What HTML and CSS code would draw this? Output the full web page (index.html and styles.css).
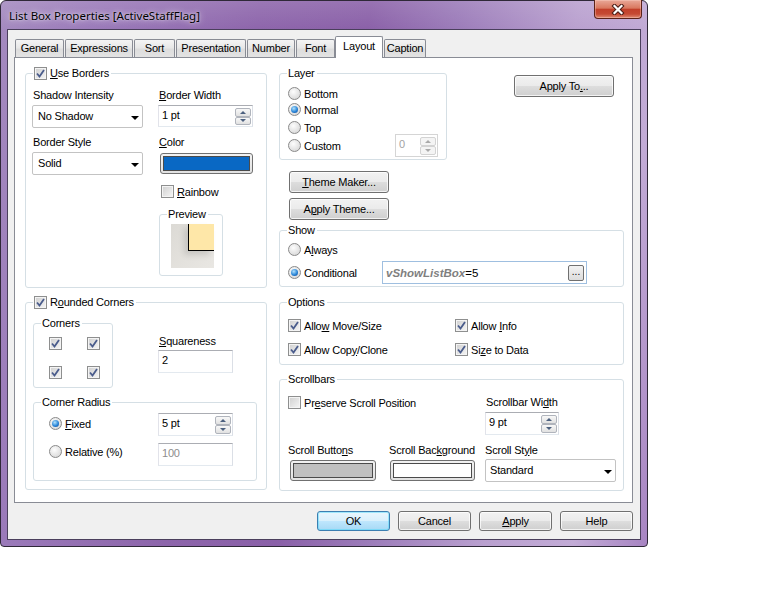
FILE: index.html
```html
<!DOCTYPE html>
<html lang="en">
<head>
    <meta charset="UTF-8">
    <title>List Box Properties [ActiveStaffFlag]</title>
    <link rel="stylesheet" href="styles.css">
</head>
<body>
<div class="window">
    <div class="titlebar">
        <div class="title">List Box Properties [ActiveStaffFlag]</div>
        <div class="close">
            <svg width="14" height="11" viewBox="0 0 14 11"><path class="x-edge" d="M3.5 2l7 7M10.5 2l-7 7"/><path class="x-core" d="M3.5 2l7 7M10.5 2l-7 7"/></svg>
        </div>
    </div>

    <div class="client">
        <div class="tabs">
            <div class="tab w-general">General</div>
            <div class="tab w-expr">Expressions</div>
            <div class="tab w-sort">Sort</div>
            <div class="tab w-pres">Presentation</div>
            <div class="tab w-num">Number</div>
            <div class="tab w-font">Font</div>
            <div class="tab active w-layout">Layout</div>
            <div class="tab w-caption">Caption</div>
        </div>

        <div class="page">
            <!-- left column -->
            <div class="col-left">
                <div class="group g-borders">
                    <div class="legend">
                        <span class="cb on"><svg viewBox="0 0 11 11"><path d="M2 5.5l2.5 3L9 2"/></svg></span>
                        <span><u>U</u>se Borders</span>
                    </div>
                    <div class="borders-body">
                        <div class="borders-a">
                            <div class="lbl">Shadow Intensity</div>
                            <div class="combo mt3">No Shadow</div>
                            <div class="lbl mt8">Border Style</div>
                            <div class="combo mt3">Solid</div>
                        </div>
                        <div class="borders-b">
                            <div class="lbl"><u>B</u>order Width</div>
                            <div class="spin mt3 w95">
                                <div class="spin-val">1 pt</div>
                                <div class="arrows"><span class="arr up"></span><span class="arr down"></span></div>
                            </div>
                            <div class="lbl mt9"><u>C</u>olor</div>
                            <div class="colorbtn border-color"><span class="swatch blue"></span></div>
                            <div class="check rainbow">
                                <span class="cb"></span><span><u>R</u>ainbow</span>
                            </div>
                            <div class="group g-preview">
                                <div class="legend">Preview</div>
                                <div class="preview"><div class="preview-box"></div></div>
                            </div>
                        </div>
                    </div>
                </div>

                <div class="group g-rounded">
                    <div class="legend">
                        <span class="cb on"><svg viewBox="0 0 11 11"><path d="M2 5.5l2.5 3L9 2"/></svg></span>
                        <span>R<u>o</u>unded Corners</span>
                    </div>
                    <div class="rounded-top">
                        <div class="group g-corners">
                            <div class="legend">Corners</div>
                            <div class="corner-grid">
                                <span class="cb on"><svg viewBox="0 0 11 11"><path d="M2 5.5l2.5 3L9 2"/></svg></span>
                                <span class="cb on"><svg viewBox="0 0 11 11"><path d="M2 5.5l2.5 3L9 2"/></svg></span>
                                <span class="cb on"><svg viewBox="0 0 11 11"><path d="M2 5.5l2.5 3L9 2"/></svg></span>
                                <span class="cb on"><svg viewBox="0 0 11 11"><path d="M2 5.5l2.5 3L9 2"/></svg></span>
                            </div>
                        </div>
                        <div class="squareness">
                            <div class="lbl"><u>S</u>quareness</div>
                            <div class="edit field75 mt2">2</div>
                        </div>
                    </div>
                    <div class="group g-radius">
                        <div class="legend">Corner Radius</div>
                        <div class="radius-row first">
                            <div class="radio rad-wide"><span class="rb on"></span><span><u>F</u>ixed</span></div>
                            <div class="spin field75">
                                <div class="spin-val">5 pt</div>
                                <div class="arrows"><span class="arr up"></span><span class="arr down"></span></div>
                            </div>
                        </div>
                        <div class="radius-row second">
                            <div class="radio rad-wide"><span class="rb"></span><span>Relative (%)</span></div>
                            <div class="edit field75 muted">100</div>
                        </div>
                    </div>
                </div>
            </div>

            <!-- right column -->
            <div class="col-right">
                <div class="top-right">
                    <div class="group g-layer">
                        <div class="legend">Layer</div>
                        <div class="layer-body">
                            <div class="radio r-bottom"><span class="rb"></span><span>Bottom</span></div>
                            <div class="radio r-normal"><span class="rb on"></span><span>Normal</span></div>
                            <div class="radio r-top"><span class="rb"></span><span>Top</span></div>
                            <div class="custom-row">
                                <div class="radio"><span class="rb"></span><span>Custom</span></div>
                                <div class="spin custom-spin disabled">
                                    <div class="spin-val">0</div>
                                    <div class="arrows"><span class="arr up"></span><span class="arr down"></span></div>
                                </div>
                            </div>
                        </div>
                    </div>
                    <div class="btn apply-to">Apply To<u>.</u>..</div>
                </div>
                <div class="btn theme-btn first"><u>T</u>heme Maker...</div>
                <div class="btn theme-btn second">A<u>p</u>ply Theme...</div>

                <div class="group g-show">
                    <div class="legend">Show</div>
                    <div class="radio show-always"><span class="rb"></span><span>A<u>l</u>ways</span></div>
                    <div class="show-cond">
                        <div class="radio cond-lbl"><span class="rb on"></span><span>Conditional</span></div>
                        <div class="cond-edit">
                            <span class="expr-var">vShowListBox</span><span>=5</span>
                            <span class="dots">...</span>
                        </div>
                    </div>
                </div>

                <div class="group g-options">
                    <div class="legend">Options</div>
                    <div class="opt-row first">
                        <div class="check opt-wide"><span class="cb on"><svg viewBox="0 0 11 11"><path d="M2 5.5l2.5 3L9 2"/></svg></span><span>Allo<u>w</u> Move/Size</span></div>
                        <div class="check"><span class="cb on"><svg viewBox="0 0 11 11"><path d="M2 5.5l2.5 3L9 2"/></svg></span><span>Allow <u>I</u>nfo</span></div>
                    </div>
                    <div class="opt-row second">
                        <div class="check opt-wide"><span class="cb on"><svg viewBox="0 0 11 11"><path d="M2 5.5l2.5 3L9 2"/></svg></span><span>Allow Cop<u>y</u>/Clone</span></div>
                        <div class="check"><span class="cb on"><svg viewBox="0 0 11 11"><path d="M2 5.5l2.5 3L9 2"/></svg></span><span>Si<u>z</u>e to Data</span></div>
                    </div>
                </div>

                <div class="group g-scroll">
                    <div class="legend">Scrollbars</div>
                    <div class="scroll-grid">
                        <div class="check preserve"><span class="cb"></span><span>Pr<u>e</u>serve Scroll Position</span></div>
                        <div class="sw-block">
                            <div class="lbl">Scrollbar Wi<u>d</u>th</div>
                            <div class="spin mt3 sw-spin">
                                <div class="spin-val">9 pt</div>
                                <div class="arrows"><span class="arr up"></span><span class="arr down"></span></div>
                            </div>
                        </div>
                        <div class="sb-block">
                            <div class="lbl">Scroll Butto<u>n</u>s</div>
                            <div class="colorbtn sb-gray"><span class="swatch gray"></span></div>
                        </div>
                        <div class="sb-block">
                            <div class="lbl">Scroll Bac<u>k</u>ground</div>
                            <div class="colorbtn sb-white"><span class="swatch white"></span></div>
                        </div>
                        <div class="sb-block">
                            <div class="lbl">Scroll St<u>y</u>le</div>
                            <div class="combo mt2 style-combo">Standard</div>
                        </div>
                    </div>
                </div>
            </div>
        </div>

        <div class="dlg-buttons">
            <div class="btn default">OK</div>
            <div class="btn">Cancel</div>
            <div class="btn"><u>A</u>pply</div>
            <div class="btn">Help</div>
        </div>
    </div>
</div>
</body>
</html>
```

FILE: styles.css
```css
* {
    box-sizing: border-box;
}

body {
    margin: 0;
    background: #fff;
    font-family: "Liberation Sans", Arial, sans-serif;
    font-size: 11px;
    letter-spacing: -0.2px;
    color: #000;
}

u {
    text-decoration: underline;
    text-underline-offset: 1px;
}

/* window frame */
.window {
    width: 648px;
    height: 547px;
    border: 1px solid #2f2838;
    border-radius: 6px 6px 4px 4px;
    padding: 0 6px 6px;
    background:
        linear-gradient(to bottom, rgba(255, 255, 255, 0.12), rgba(255, 255, 255, 0) 30px),
        linear-gradient(100deg, #a48abf 0%, #9b7bba 12%, #8d65ab 35%, #8a60a8 50%, #9b7bb9 62%, #b9a0cf 78%, #c2abd6 90%, #a784c2 100%);
}

.titlebar {
    height: 28px;
    display: flex;
    justify-content: space-between;
    align-items: flex-start;
}

.title {
    font-family: "Noto Sans", "Liberation Sans", sans-serif;
    font-size: 11.5px;
    letter-spacing: 0;
    line-height: 16px;
    padding: 7px 0 0 2px;
    text-shadow: 0 0 6px rgba(255, 255, 255, 0.85), 0 0 2px rgba(255, 255, 255, 0.6);
}

.close {
    width: 48px;
    height: 19px;
    margin: -1px -1px 0 0;
    border: 1px solid #5b2219;
    border-top: 0;
    border-radius: 0 0 4px 4px;
    background: linear-gradient(#e9a898 0%, #d9785f 45%, #c2402a 52%, #c54a33 78%, #e08c74 100%);
    box-shadow: inset 0 0 0 1px rgba(255, 220, 210, 0.35);
    display: flex;
    align-items: center;
    justify-content: center;
}

.close svg path {
    fill: none;
    stroke-linecap: square;
}

.x-edge {
    stroke: #4a1d16;
    stroke-width: 4.2;
}

.x-core {
    stroke: #fff;
    stroke-width: 2.2;
}

.client {
    height: 511px;
    border: 1px solid #4a3f5c;
    background: #f0f0f0;
}

/* tabs */
.tabs {
    display: flex;
    align-items: flex-end;
    height: 21px;
    margin-top: 6px;
    padding-left: 7px;
}

.tab {
    height: 18px;
    margin-left: 1px;
    border: 1px solid #898c95;
    border-bottom: 0;
    border-radius: 2px 2px 0 0;
    background: linear-gradient(#f4f4f4, #e8e8e8 45%, #dddddd 55%, #e3e3e3);
    text-align: center;
    line-height: 16px;
    white-space: nowrap;
}

.tab:first-child {
    margin-left: 0;
}

.tab.active {
    position: relative;
    z-index: 2;
    height: 22px;
    margin-left: 0;
    margin-bottom: -1px;
    background: #fff;
    line-height: 18px;
}

.w-general { width: 49px; }
.w-expr { width: 68px; }
.w-sort { width: 41px; }
.w-pres { width: 70px; }
.w-num { width: 48px; }
.w-font { width: 39px; }
.w-layout { width: 48px; }
.w-caption { width: 42px; }

/* tab page */
.page {
    position: relative;
    z-index: 1;
    height: 446px;
    margin: 0 7px 0 6px;
    border: 1px solid #898c95;
    background: #fff;
    padding: 15px 0 0 10px;
    display: flex;
    align-items: flex-start;
    gap: 12px;
}

.col-left {
    width: 242px;
}

.col-right {
    width: 345px;
}

/* group boxes */
.group {
    border: 1px solid #d5dfe5;
    border-radius: 3px;
}

.legend {
    display: flex;
    align-items: center;
    gap: 3px;
    width: max-content;
    height: 13px;
    line-height: 13px;
    margin: -7px 0 0 7px;
    padding: 0 2px 0 1px;
    background: #fff;
}

.lbl {
    height: 13px;
    line-height: 13px;
    padding-left: 1px;
    white-space: nowrap;
}

.mt2 { margin-top: 2px; }
.mt3 { margin-top: 3px; }
.mt8 { margin-top: 8px; }
.mt9 { margin-top: 9px; }

/* controls */
.combo {
    position: relative;
    height: 23px;
    border: 1px solid #c3c3c3;
    border-radius: 2px;
    background: #fff;
    padding-left: 5px;
    line-height: 21px;
}

.combo::after {
    content: "";
    position: absolute;
    right: 3px;
    top: 10px;
    border-left: 4px solid transparent;
    border-right: 4px solid transparent;
    border-top: 4px solid #000;
}

.edit,
.spin {
    height: 23px;
    border: 1px solid;
    border-color: #abadb3 #dbdfe6 #e3e9ef #e2e3ea;
    background: #fff;
}

.edit {
    padding: 2px 0 0 3px;
    line-height: 14px;
}

.edit.muted {
    color: #8d8d8d;
}

.field75 {
    width: 75px;
}

.w95 {
    width: 95px;
}

.spin {
    display: flex;
    height: 22px;
    padding: 2px 1px 1px 0;
}

.spin-val {
    flex: 1;
    padding-left: 3px;
    line-height: 14px;
}

.arrows {
    width: 16px;
    display: flex;
    flex-direction: column;
    justify-content: space-between;
}

.arr {
    height: 9px;
    border: 1px solid #b0b4bc;
    border-radius: 2px;
    background: linear-gradient(#f8f8f8, #e1e1e1);
    display: flex;
    align-items: center;
    justify-content: center;
}

.arr.up::after {
    content: "";
    border-left: 3px solid transparent;
    border-right: 3px solid transparent;
    border-bottom: 3px solid #4c607f;
}

.arr.down::after {
    content: "";
    border-left: 3px solid transparent;
    border-right: 3px solid transparent;
    border-top: 3px solid #4c607f;
}

.spin.disabled {
    border-color: #d5d5d5;
    color: #a3a3a3;
}

.spin.disabled .arr {
    border-color: #d3d3d3;
    background: #f4f4f4;
}

.spin.disabled .arr.up::after { border-bottom-color: #a9a9a9; }
.spin.disabled .arr.down::after { border-top-color: #a9a9a9; }

.btn {
    display: flex;
    align-items: center;
    justify-content: center;
    border: 1px solid #707070;
    border-radius: 3px;
    background: linear-gradient(#f2f2f2, #ebebeb 48%, #dddddd 52%, #cfcfcf);
    box-shadow: inset 0 0 0 1px rgba(255, 255, 255, 0.75);
    white-space: nowrap;
}

.btn.default {
    border-color: #3c7fb1;
    background: linear-gradient(#eaf6fd, #d9f0fc 48%, #bee6fd 52%, #a7d9f5);
    box-shadow: inset 0 0 0 1px rgba(72, 216, 251, 0.45);
}

.cb {
    flex: none;
    width: 13px;
    height: 13px;
    border: 1px solid #8e8f8f;
    background: linear-gradient(135deg, #cfcfcf, #f6f6f6);
    box-shadow: inset 0 0 0 1px #f4f4f4;
}

.cb svg {
    display: block;
    width: 11px;
    height: 11px;
}

.cb svg path {
    fill: none;
    stroke: #4a5c8c;
    stroke-width: 1.8;
}

.rb {
    position: relative;
    flex: none;
    width: 13px;
    height: 13px;
    border: 1px solid #8a8a8a;
    border-radius: 50%;
    background: radial-gradient(circle at 40% 35%, #fdfdfd, #dedede 70%, #cdcdcd);
}

.rb.on::after {
    content: "";
    position: absolute;
    left: 2px;
    top: 2px;
    width: 7px;
    height: 7px;
    border-radius: 50%;
    background: radial-gradient(circle at 40% 35%, #b3e2fc, #2a86d8 55%, #0d3f8c);
}

.check,
.radio {
    display: flex;
    align-items: center;
    gap: 3px;
    height: 13px;
    white-space: nowrap;
}

.colorbtn {
    height: 21px;
    border: 1px solid #707070;
    border-radius: 3px;
    padding: 2px;
    background: linear-gradient(#f2f2f2, #e2e2e2);
}

.swatch {
    display: block;
    height: 100%;
    border: 1px solid #4b4b4b;
}

.swatch.blue { background: #0968c4; }
.swatch.gray { background: #c0c0c0; }
.swatch.white { background: #fff; }

/* use borders group */
.g-borders {
    height: 215px;
}

.borders-body {
    display: flex;
    padding-left: 6px;
    margin-top: 9px;
}

.borders-a {
    width: 111px;
}

.borders-b {
    width: 95px;
    margin-left: 15px;
}

.border-color {
    width: 93px;
    margin: 4px 0 0 2px;
}

.rainbow {
    margin: 11px 0 0 3px;
}

.g-preview {
    width: 64px;
    height: 62px;
    margin: 16px 0 0 1px;
}

.preview {
    width: 43px;
    height: 44px;
    margin: 3px 0 0 11px;
    display: flex;
    justify-content: flex-end;
    background: linear-gradient(135deg, #dcdad5, #e9e7e3);
}

.preview-box {
    width: 26px;
    height: 27px;
    background: #fee7a8;
    border-left: 1px solid #000;
    border-bottom: 1px solid #000;
    box-shadow: -4px 4px 6px rgba(0, 0, 0, 0.12);
}

/* rounded corners group */
.g-rounded {
    height: 188px;
    margin-top: 14px;
}

.rounded-top {
    display: flex;
    align-items: flex-start;
    margin-top: 14px;
}

.g-corners {
    width: 80px;
    height: 65px;
    margin-left: 7px;
}

.corner-grid {
    display: grid;
    grid-template-columns: 13px 13px;
    column-gap: 25px;
    row-gap: 16px;
    margin: 7px 0 0 15px;
}

.squareness {
    margin: 12px 0 0 45px;
}

.g-radius {
    width: 224px;
    height: 79px;
    margin: 14px 0 0 7px;
}

.radius-row {
    display: flex;
    align-items: flex-start;
    padding-left: 15px;
}

.radius-row.first {
    margin-top: 4px;
    height: 23px;
}

.radius-row.first .radio {
    margin-top: 4px;
}

.radius-row.first .spin {
    height: 23px;
}

.radius-row.second {
    margin-top: 7px;
}

.radius-row.second .radio {
    margin-top: 2px;
}

.rad-wide {
    width: 109px;
}

/* layer group */
.top-right {
    display: flex;
    align-items: flex-start;
}

.g-layer {
    width: 168px;
    height: 87px;
}

.layer-body {
    padding-left: 8px;
}

.r-bottom { margin-top: 7px; }
.r-normal { margin-top: 3px; }
.r-top { margin-top: 5px; }

.custom-row {
    display: flex;
    align-items: center;
    height: 23px;
}

.custom-spin {
    width: 43px;
    height: 23px;
    margin: 0 8px 0 auto;
}

.apply-to {
    width: 100px;
    height: 22px;
    margin: 2px 0 0 67px;
}

.theme-btn {
    width: 100px;
    height: 22px;
    margin-left: 10px;
}

.theme-btn.first { margin-top: 11px; }
.theme-btn.second { margin-top: 5px; }

/* show group */
.g-show {
    height: 57px;
    margin-top: 10px;
}

.show-always {
    margin: 6px 0 0 8px;
}

.show-cond {
    display: flex;
    align-items: center;
    height: 23px;
    margin: 5px 0 0 8px;
}

.cond-lbl {
    width: 94px;
}

.cond-edit {
    width: 205px;
    height: 23px;
    border: 1px solid #9fbfe0;
    display: flex;
    align-items: center;
    padding-left: 3px;
    font-size: 11.5px;
    letter-spacing: 0;
}

.expr-var {
    font-weight: bold;
    font-style: italic;
    color: #7f7f7f;
}

.dots {
    width: 16px;
    height: 16px;
    margin: 0 2px 0 auto;
    border: 1px solid #707070;
    border-radius: 2px;
    background: linear-gradient(#f2f2f2, #dcdcdc);
    font-size: 10px;
    line-height: 12px;
    text-align: center;
    letter-spacing: 0;
}

/* options group */
.g-options {
    height: 63px;
    margin-top: 15px;
}

.opt-row {
    display: flex;
    padding-left: 8px;
}

.opt-row.first { margin-top: 10px; }
.opt-row.second { margin-top: 11px; }

.opt-wide {
    width: 167px;
}

/* scrollbars group */
.g-scroll {
    height: 112px;
    margin-top: 14px;
}

.scroll-grid {
    display: grid;
    grid-template-columns: 101px 96px 131px;
    padding-left: 8px;
    margin-top: 10px;
}

.preserve {
    grid-column: span 2;
}

.sw-spin {
    width: 74px;
    height: 23px;
}

.sb-block {
    margin-top: 9px;
}

.sb-block .lbl {
    padding-left: 0;
}

.sb-gray {
    width: 86px;
    margin: 3px 0 0 2px;
}

.sb-white {
    width: 85px;
    margin: 3px 0 0 1px;
}

.style-combo {
    width: 131px;
    padding-left: 4px;
}

/* dialog buttons */
.dlg-buttons {
    display: flex;
    justify-content: flex-end;
    gap: 8px;
    padding-right: 7px;
    margin-top: 8px;
}

.dlg-buttons .btn {
    width: 73px;
    height: 20px;
}
```
